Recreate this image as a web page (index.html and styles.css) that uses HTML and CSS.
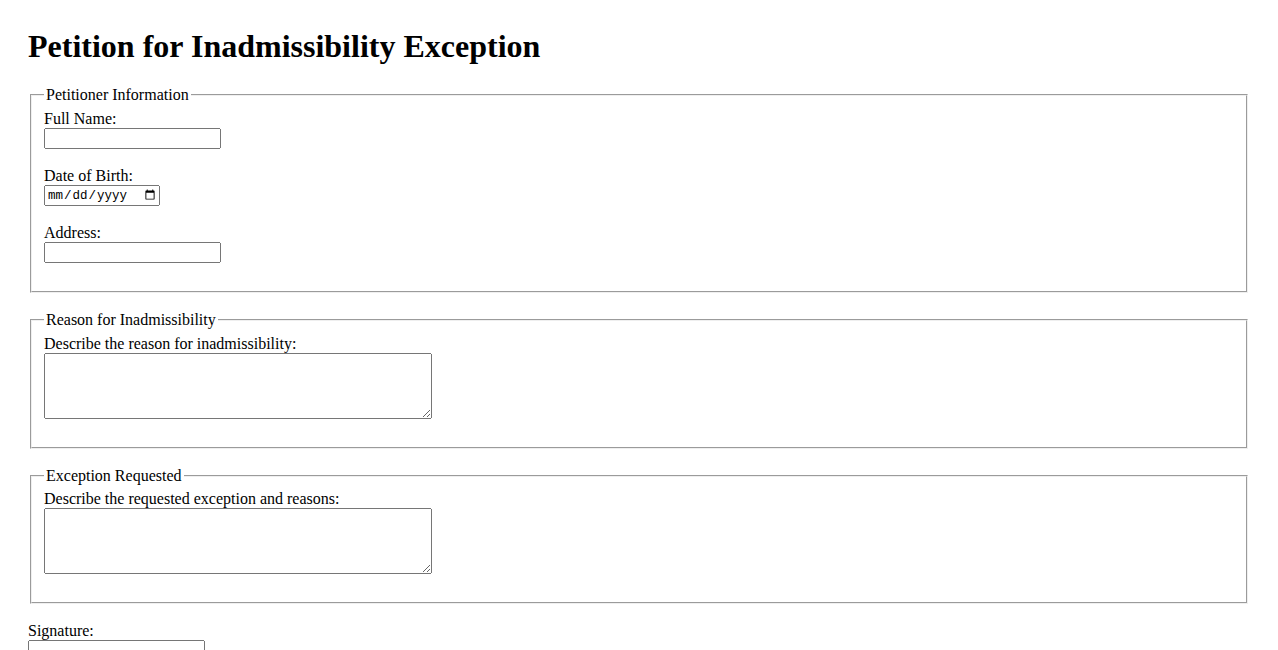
FILE: index.html
```html
<!DOCTYPE html>
<html lang="en">
<head>
    <meta charset="UTF-8">
    <title>Petition for Inadmissibility Exception</title>
    <link rel="stylesheet" href="styles.css">
</head>
<body>

<h1>Petition for Inadmissibility Exception</h1>

<form id="petitionForm">
    <fieldset>
        <legend>Petitioner Information</legend>
        <label for="fullName">Full Name:</label><br>
        <input type="text" id="fullName" name="fullName"><br><br>

        <label for="dob">Date of Birth:</label><br>
        <input type="date" id="dob" name="dob"><br><br>

        <label for="address">Address:</label><br>
        <input type="text" id="address" name="address"><br><br>
    </fieldset>
    <br>

    <fieldset>
        <legend>Reason for Inadmissibility</legend>
        <label for="reason">Describe the reason for inadmissibility:</label><br>
        <textarea id="reason" name="reason" rows="4" cols="50"></textarea><br><br>
    </fieldset>
    <br>

    <fieldset>
        <legend>Exception Requested</legend>
        <label for="exception">Describe the requested exception and reasons:</label><br>
        <textarea id="exception" name="exception" rows="4" cols="50"></textarea><br><br>
    </fieldset>
    <br>

    <label for="signature">Signature:</label><br>
    <input type="text" id="signature" name="signature"><br><br>

    <button type="submit">Submit Petition</button>
</form>

</body>
</html>
```

FILE: styles.css
```css
body {
    font-family: "Liberation Serif", "Times New Roman", serif;
    padding: 20px;
}
h1 {
    margin-top: 0;
}
input[type="text"] {
    box-sizing: border-box;
    width: 177px;
    height: 21px;
}
input[type="date"] {
    box-sizing: border-box;
    width: 116px;
    height: 21px;
    font-family: "Liberation Mono", "Courier New", monospace;
    font-size: 12.5px;
    vertical-align: bottom;
}
textarea {
    box-sizing: border-box;
    width: 388px;
    height: 66px;
    vertical-align: bottom;
}
```
